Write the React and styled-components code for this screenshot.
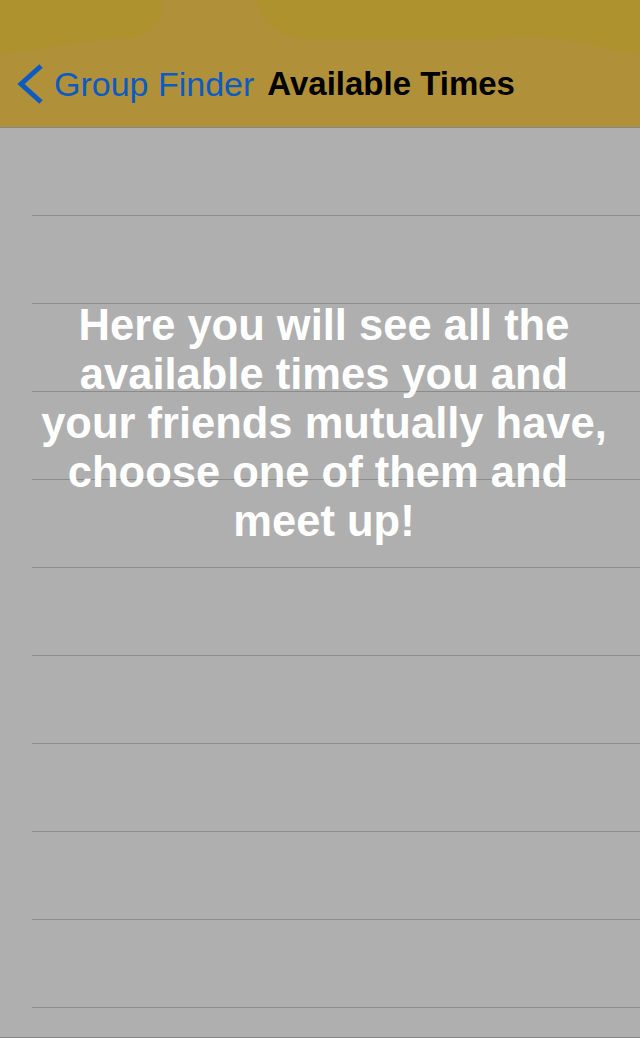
import React from 'react';
import styled, { createGlobalStyle } from 'styled-components';

const GlobalStyle = createGlobalStyle`
  html,
  body {
    margin: 0;
    padding: 0;
    background: #afafaf;
  }

  * {
    box-sizing: border-box;
  }
`;

const StyledScreen = styled.div`
  display: flex;
  flex-direction: column;
  width: 640px;
  height: 1038px;
  overflow: hidden;
  background: #afafaf;
  border-bottom: 1px solid #878787;
  font-family: 'Liberation Sans', Arial, sans-serif;
`;

const StyledNavBar = styled.header`
  position: relative;
  flex: none;
  height: 128px;
  padding-top: 40px;
  background: #b09139;
  border-bottom: 1px solid #868686;

  .backdrop {
    position: absolute;
    top: 0;
    left: 0;
    width: 640px;
    height: 60px;
  }
`;

const StyledNavRow = styled.div`
  position: relative;
  display: flex;
  align-items: center;
  height: 87px;
  padding-left: 17px;
`;

const StyledBack = styled.a`
  display: flex;
  align-items: center;
  color: #0b5bc3;
  font-size: 34px;
  line-height: 34px;
  text-decoration: none;

  svg {
    display: block;
    margin-right: 11px;
  }
`;

const StyledTitle = styled.h1`
  margin: 0 0 0 13px;
  color: #000;
  font-size: 33px;
  font-weight: 700;
  line-height: 33px;
`;

const StyledList = styled.ul`
  position: relative;
  flex: 1;
  margin: 0;
  padding: 0;
  list-style: none;
  overflow: hidden;
`;

const StyledRow = styled.li`
  height: 88px;
  margin-left: 32px;
  border-bottom: 1px solid #8b8b8b;
`;

const StyledMessage = styled.p`
  position: absolute;
  top: 173px;
  left: 0;
  right: 0;
  margin: 0;
  padding: 0 28px 0 36px;
  color: #fff;
  font-size: 43.5px;
  font-weight: 700;
  line-height: 49px;
  text-align: center;
`;

const Backdrop = () => (
  <svg className="backdrop" viewBox="0 0 640 60" aria-hidden="true">
    <path d="M0 0 H163 C163 22 150 37 122 39 C90 41 55 46 0 55 Z" fill="#ad922d" />
    <path
      d="M257 0 C261 24 282 40 318 40 L482 40 C510 37 540 36 575 42 C605 47 622 52 640 55 V0 Z"
      fill="#ad922d"
    />
  </svg>
);

const Chevron = () => (
  <svg width="26" height="40" viewBox="0 0 26 40" aria-hidden="true">
    <polyline
      points="24,2 4,20 24,38"
      fill="none"
      stroke="#0b5bc3"
      strokeWidth="5"
      strokeLinecap="butt"
      strokeLinejoin="miter"
    />
  </svg>
);

const App = () => {
  const rows = Array.from({ length: 11 });

  return (
    <>
      <GlobalStyle />
      <StyledScreen>
        <StyledNavBar>
          <Backdrop />
          <StyledNavRow>
            <StyledBack href="#">
              <Chevron />
              Group Finder
            </StyledBack>
            <StyledTitle>Available Times</StyledTitle>
          </StyledNavRow>
        </StyledNavBar>

        <StyledList>
          {rows.map((_, i) => (
            <StyledRow key={i} />
          ))}
          <StyledMessage>
            Here you will see all the available times you and your friends mutually have, choose
            one of them and{'\u00a0'} meet up!
          </StyledMessage>
        </StyledList>
      </StyledScreen>
    </>
  );
};

export default App;
